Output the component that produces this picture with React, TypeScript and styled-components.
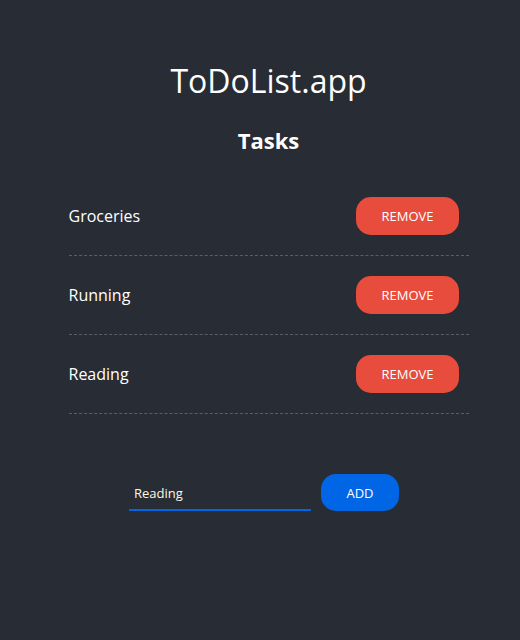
import React, { useState } from "react";
import styled, { createGlobalStyle } from "styled-components";

const Global = createGlobalStyle`
  html, body { margin: 0; padding: 0; background: #282c34; }
  body { font-family: "Open Sans", "Noto Sans", sans-serif; color: #ffffff; }
  * { box-sizing: border-box; }
`;

const Page = styled.div`
  min-height: 640px;
  background: #282c34;
  display: flex;
  flex-direction: column;
  align-items: center;
  padding: 59px 0 0 17px;
`;

const Title = styled.h1`
  margin: 0;
  font-size: 32px;
  font-weight: 400;
  line-height: 44px;
  color: #ffffff;
`;

const Subtitle = styled.h2`
  margin: 22px 0 0;
  font-size: 22px;
  font-weight: 700;
  line-height: 30px;
  color: #ffffff;
`;

const List = styled.ul`
  list-style: none;
  margin: 22px 0 0;
  padding: 0;
  width: 400px;
`;

const Row = styled.li`
  display: flex;
  align-items: center;
  justify-content: space-between;
  padding: 20px 10px 20px 0;
  border-bottom: 1px dashed #5a5e66;
`;

const TaskName = styled.span`
  font-size: 16px;
  color: #ffffff;
`;

const Pill = styled.button<{ $tone: "danger" | "primary" }>`
  font-family: "Open Sans", "Noto Sans", sans-serif;
  font-size: 13px;
  height: 38px;
  padding: 0 25px;
  border: none;
  border-radius: 15px;
  color: #ffffff;
  background: ${(p) => (p.$tone === "danger" ? "#e74c3c" : "#0066e5")};
  cursor: pointer;
  text-transform: uppercase;
`;

const AddPill = styled(Pill)`
  height: 37px;
  width: 78px;
  padding: 0;
`;

const Form = styled.form`
  display: flex;
  align-items: center;
  gap: 10px;
  margin-top: 60px;
  padding-right: 9px;
`;

const Input = styled.input`
  width: 182px;
  height: 37px;
  padding: 2px 5px 0;
  background: transparent;
  border: none;
  border-bottom: 2px solid #0066e5;
  color: #fdf8e8;
  font-family: "Open Sans", "Noto Sans", sans-serif;
  font-size: 13px;
  outline: none;
`;

export default function App() {
  const [tasks] = useState(["Groceries", "Running", "Reading"]);
  const [value, setValue] = useState("Reading");
  return (
    <>
      <Global />
      <Page>
        <Title>ToDoList.app</Title>
        <Subtitle>Tasks</Subtitle>
        <List>
          {tasks.map((t) => (
            <Row key={t}>
              <TaskName>{t}</TaskName>
              <Pill $tone="danger">Remove</Pill>
            </Row>
          ))}
        </List>
        <Form onSubmit={(e) => e.preventDefault()}>
          <Input value={value} onChange={(e) => setValue(e.target.value)} />
          <AddPill $tone="primary" type="submit">Add</AddPill>
        </Form>
      </Page>
    </>
  );
}
